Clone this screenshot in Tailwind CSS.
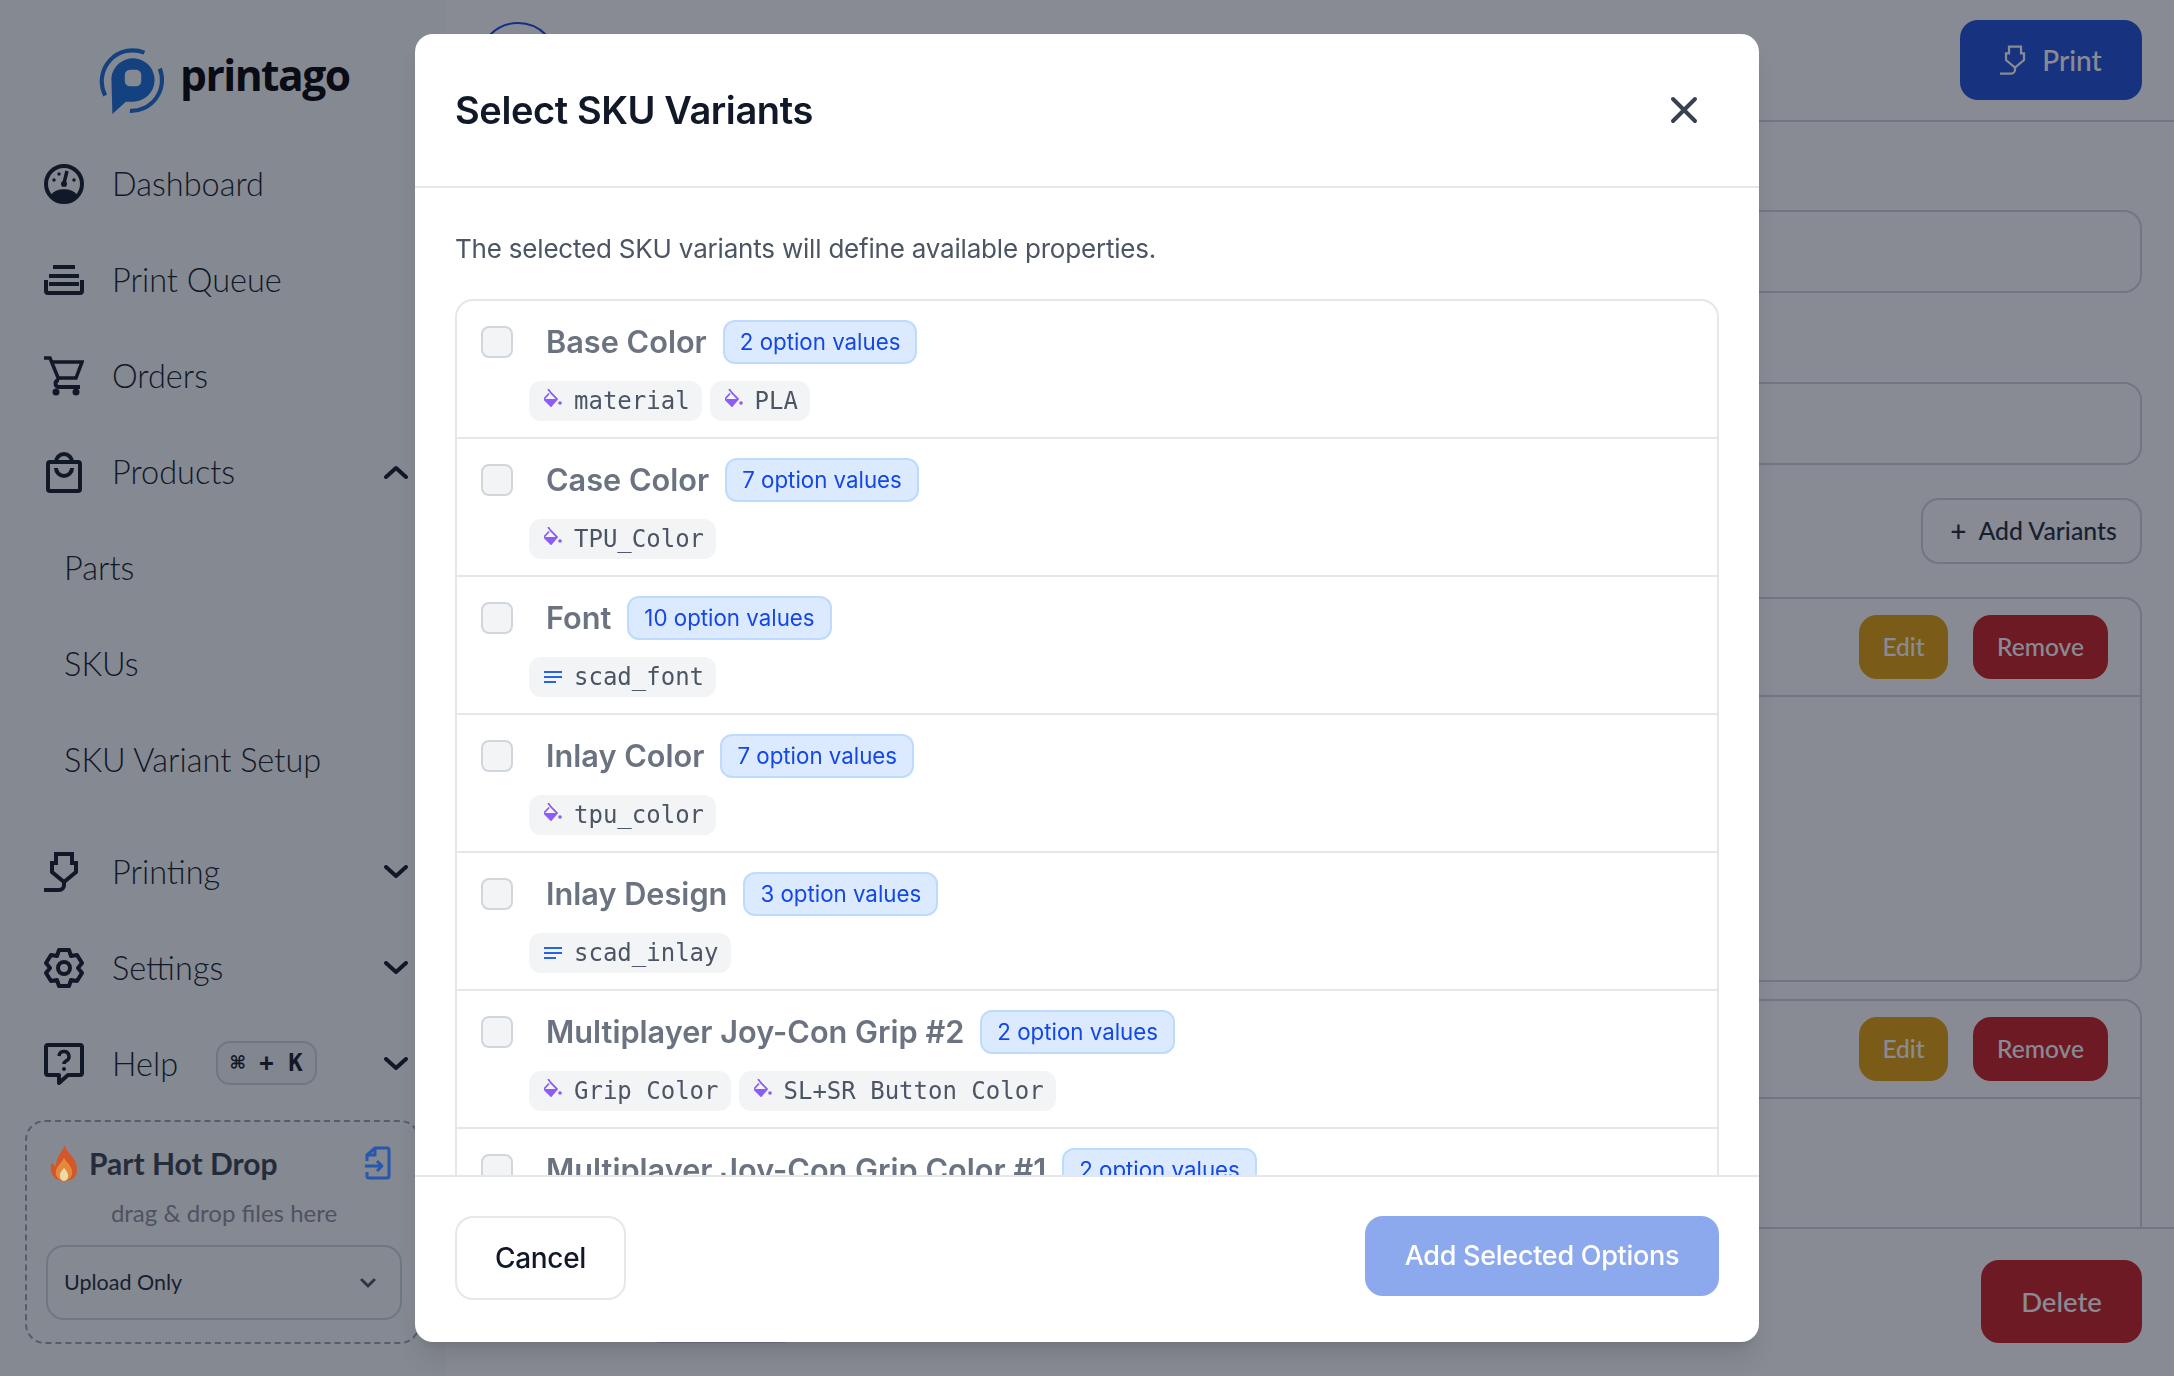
<!DOCTYPE html>
<html lang="en">
<head>
  <meta charset="UTF-8" />
  <title>Printago - Select SKU Variants</title>
  <meta name="viewport" content="width=device-width, initial-scale=1.0" />
  <script src="https://cdn.jsdelivr.net/npm/@tailwindcss/browser@4"></script>
</head>
<body class="bg-white h-screen overflow-hidden flex font-['Inter',sans-serif]">

  <!-- Sidebar -->
  <aside class="w-[446px] h-screen shrink-0 bg-[#f9fafb] flex flex-col text-[#1f2937] font-['Lato',sans-serif]">
    <div class="h-[136px] pl-[99px] pt-[48px] flex items-start gap-[15px]">
      <svg class="w-[66px] h-[66px] shrink-0" viewBox="0 0 64 64" fill="none">
        <path d="M44 4.500 A30 30 0 0 0 6 46" stroke="#1a6ad6" stroke-width="4"/>
        <path d="M59 20 A30 30 0 0 1 30 61" stroke="#1a6ad6" stroke-width="4"/>
        <path d="M13 64 L12 29 A21 21 0 1 1 33 52 L26 52 Z" fill="#176ad7"/>
        <rect x="25" y="21" width="16" height="16" rx="5" fill="#f9fafb"/>
      </svg>
      <span class="-mt-[1px] text-[42.500px] leading-[56px] font-bold tracking-[-1.5px] text-[#000] font-['Open_Sans',sans-serif]">printago</span>
    </div>
    <nav class="flex flex-col text-[32.500px] font-light text-[#111827]">
      <a class="h-[96px] flex items-center pl-[44px] gap-[28px]">
        <svg class="w-[40px] h-[40px]" viewBox="0 0 40 40" fill="none">
          <circle cx="20" cy="20" r="18" stroke="#111827" stroke-width="4"/>
          <path d="M7 31 A14 9 0 0 1 33 31 A18 18 0 0 1 7 31 Z" fill="#111827"/>
          <path d="M23 7 L20 19" stroke="#111827" stroke-width="3.500"/>
          <circle cx="20" cy="20" r="3" fill="#111827"/>
          <circle cx="10" cy="16" r="1.700" fill="#111827"/><circle cx="15" cy="10" r="1.700" fill="#111827"/><circle cx="30" cy="16" r="1.700" fill="#111827"/>
        </svg>
        <span>Dashboard</span>
      </a>
      <a class="h-[96px] flex items-center pl-[44px] gap-[28px]">
        <svg class="w-[40px] h-[30px]" viewBox="0 0 40 30" fill="none" stroke="#111827" stroke-width="4">
          <path d="M9 2h22M5 11h30M5 19h30"/>
          <path d="M2 15v11a2 2 0 0 0 2 2h32a2 2 0 0 0 2-2V15"/>
        </svg>
        <span>Print Queue</span>
      </a>
      <a class="h-[96px] flex items-center pl-[44px] gap-[28px]">
        <svg class="w-[40px] h-[40px]" viewBox="0 0 40 40" fill="none" stroke="#111827" stroke-width="3.500">
          <path d="M0 2h6l9 22"/>
          <path d="M8 6h30l-6 16H14"/>
          <path d="M15 24a3.500 3.500 0 0 0 0 7h21" stroke-width="4"/>
          <circle cx="12" cy="36" r="3.500" fill="#111827" stroke="none"/><circle cx="32" cy="36" r="3.500" fill="#111827" stroke="none"/>
        </svg>
        <span>Orders</span>
      </a>
      <a class="h-[96px] flex items-center pl-[44px] pr-[38px] gap-[28px]">
        <svg class="w-[40px] h-[42px]" viewBox="0 0 40 42" fill="none" stroke="#111827" stroke-width="4">
          <rect x="4" y="11" width="32" height="29" rx="2"/>
          <path d="M12 11a8 8 0 0 1 16 0"/>
          <path d="M12 17a8 8 0 0 0 16 0"/>
        </svg>
        <span>Products</span>
        <svg class="w-[24px] h-[14px] ml-auto" viewBox="0 0 24 14" fill="none" stroke="#111827" stroke-width="4" stroke-linecap="round" stroke-linejoin="round"><path d="M2 12l10-9 10 9"/></svg>
      </a>
      <a class="h-[96px] flex items-center pl-[64px]">Parts</a>
      <a class="h-[96px] flex items-center pl-[64px]">SKUs</a>
      <a class="h-[96px] flex items-center pl-[64px]">SKU Variant Setup</a>
      <a class="h-[96px] mt-[16px] flex items-center pl-[44px] pr-[38px] gap-[28px]">
        <svg class="w-[40px] h-[40px]" viewBox="0 0 40 40" fill="none" stroke="#111827" stroke-width="4">
          <path d="M12 2h16v9h4v9L20 30 8 20v-9h4z"/>
          <path d="M0 38h15a5 5 0 0 0 5-5v-3"/>
        </svg>
        <span>Printing</span>
        <svg class="w-[24px] h-[14px] ml-auto" viewBox="0 0 24 14" fill="none" stroke="#111827" stroke-width="4" stroke-linecap="round" stroke-linejoin="round"><path d="M2 2l10 9 10-9"/></svg>
      </a>
      <a class="h-[96px] flex items-center pl-[44px] pr-[38px] gap-[28px]">
        <svg class="w-[40px] h-[40px]" viewBox="0 0 40 40" fill="none" stroke="#111827" stroke-width="4" stroke-linejoin="round">
          <path d="M15 2h10l2 6 6-1 5 8-4 5 4 5-5 8-6-1-2 6H15l-2-6-6 1-5-8 4-5-4-5 5-8 6 1z"/>
          <circle cx="20" cy="20" r="6"/>
        </svg>
        <span>Settings</span>
        <svg class="w-[24px] h-[14px] ml-auto" viewBox="0 0 24 14" fill="none" stroke="#111827" stroke-width="4" stroke-linecap="round" stroke-linejoin="round"><path d="M2 2l10 9 10-9"/></svg>
      </a>
      <a class="h-[96px] flex items-center pl-[44px] pr-[38px] gap-[28px]">
        <svg class="w-[40px] h-[42px]" viewBox="0 0 40 42" fill="none" stroke="#111827" stroke-width="4" stroke-linejoin="round">
          <path d="M4 2h32a2 2 0 0 1 2 2v26a2 2 0 0 1-2 2H24l-9 8v-8H4a2 2 0 0 1-2-2V4a2 2 0 0 1 2-2z"/>
          <path d="M15 13a5 5 0 1 1 7 5c-1.500 1-2 2-2 3" stroke-width="3.500"/>
          <circle cx="20" cy="26" r="2" fill="#111827" stroke="none"/>
        </svg>
        <span>Help</span>
        <kbd class="ml-[10px] -mt-[2px] w-[101px] h-[44px] flex items-center justify-center border-2 border-gray-300 bg-gray-100 rounded-[14px] text-[24px] font-bold font-['DejaVu_Sans_Mono',monospace]">⌘ + K</kbd>
        <svg class="w-[24px] h-[14px] ml-auto" viewBox="0 0 24 14" fill="none" stroke="#111827" stroke-width="4" stroke-linecap="round" stroke-linejoin="round"><path d="M2 2l10 9 10-9"/></svg>
      </a>
    </nav>

    <!-- Hot drop -->
    <div class="mt-[8px] ml-[25px] w-[395px] h-[224px] border-2 border-dashed border-gray-400 rounded-[20px] pl-[19px] pt-[23px]">
      <div class="flex items-center h-[36px] w-[345px] pl-[3px]">
        <svg class="relative z-20 w-[30px] h-[36px] shrink-0" viewBox="0 0 28 35">
          <path d="M15 0c1 6 5 8 9 14 4 7 5 21-10 21C3 35-1 25 2 17l4 4c0-8 5-13 9-21z" fill="#d4562a"/>
          <path d="M14 12c1 4 8 8 8 15 0 5-5 8-8 8s-8-3-8-8c0-7 7-10 8-15z" fill="#e28a3c"/>
          <path d="M14 22c1 2 4 4 4 8s-3 5-4 5-4-1-4-5 3-6 4-8z" fill="#f0d9a8"/>
        </svg>
        <span class="ml-[10px] text-[30px] font-bold text-[#374151]">Part Hot Drop</span>
        <svg class="relative z-20 ml-auto w-[26px] h-[34px]" viewBox="0 0 26 34" fill="none" stroke="#2658ac" stroke-width="3" stroke-linejoin="round">
          <path d="M2 15V9l8-7h12a2 2 0 0 1 2 2v26a2 2 0 0 1-2 2H4a2 2 0 0 1-2-2v-4"/>
          <path d="M10 2v7H2"/>
          <path d="M0 20h16M12 15l5 5-5 5" stroke-width="3"/>
        </svg>
      </div>
      <p class="mt-[17px] w-[356px] text-center text-[24px] leading-[30px] text-[#8b8f99]">drag &amp; drop files here</p>
      <div class="mt-[17px] w-[356px] h-[75px] border-2 border-gray-300 rounded-[18px] flex items-center pl-[16px] pr-[24px] text-[21.500px]">
        <span>Upload Only</span>
        <svg class="ml-auto w-[16px] h-[10px]" viewBox="0 0 16 10" fill="none" stroke="#4b5563" stroke-width="3" stroke-linecap="round" stroke-linejoin="round"><path d="M2 2l6 6 6-6"/></svg>
      </div>
    </div>
  </aside>

  <!-- Page behind the dialog -->
  <main class="flex-1 h-screen flex flex-col font-['Lato',sans-serif]">
    <header class="h-[122px] shrink-0 border-b-2 border-gray-300 flex items-start pt-[20px] pl-[32px] pr-[32px]">
      <div class="w-[80px] h-[80px] mt-[2px] rounded-full border-2 border-blue-700"></div>
      <button class="ml-auto w-[182px] h-[80px] bg-[#1d4ed8] rounded-[18px] flex items-center justify-center gap-[12px] text-white text-[28px] font-medium">
        <svg class="w-[30px] h-[30px]" viewBox="0 0 40 40" fill="none" stroke="white" stroke-width="3"><path d="M12 2h16v9h4v9L20 30 8 20v-9h4z"/><path d="M0 38h15a5 5 0 0 0 5-5v-3"/></svg>
        Print
      </button>
    </header>
    <section class="flex-1 overflow-hidden pr-[32px] pl-[32px] pt-[88px] flex flex-col items-stretch">
      <div class="h-[83px] border-2 border-gray-300 rounded-[18px] shrink-0"></div>
      <div class="h-[83px] mt-[89px] border-2 border-gray-300 rounded-[18px] shrink-0"></div>
      <div class="mt-[33px] shrink-0 flex justify-end">
        <button class="w-[221px] h-[66px] border-2 border-gray-300 rounded-[18px] flex items-center justify-center gap-[12px] pl-[4px] text-[24.800px] font-medium text-[#1f2937]">
          <span class="text-[28px] leading-none">+</span> Add Variants
        </button>
      </div>
      <div class="mt-[33px] h-[385px] shrink-0 border-2 border-gray-300 rounded-[18px]">
        <div class="h-[98px] border-b-2 border-gray-300 flex items-start pt-[16px] justify-end gap-[25px] pr-[32px] text-[24.500px] font-medium text-white">
          <button class="w-[89px] h-[64px] rounded-[18px] bg-[#e39e09]">Edit</button>
          <button class="w-[135px] h-[64px] rounded-[18px] bg-[#cb1c20]">Remove</button>
        </div>
      </div>
      <div class="mt-[17px] h-[300px] shrink-0 border-2 border-gray-300 rounded-[18px]">
        <div class="h-[98px] border-b-2 border-gray-300 flex items-start pt-[16px] justify-end gap-[25px] pr-[32px] text-[24.500px] font-medium text-white">
          <button class="w-[89px] h-[64px] rounded-[18px] bg-[#e39e09]">Edit</button>
          <button class="w-[135px] h-[64px] rounded-[18px] bg-[#cb1c20]">Remove</button>
        </div>
      </div>
    </section>
    <footer class="h-[149px] shrink-0 border-t-2 border-gray-300 flex items-start justify-between pt-[31px] pl-[198px] pr-[32px]">
      <button class="w-[155px] h-[83px] rounded-[18px] bg-gray-100 border-2 border-gray-300"></button>
      <button class="w-[161px] h-[83px] rounded-[18px] bg-[#cb1c20] text-white text-[27.500px] font-medium">Delete</button>
    </footer>
  </main>

  <!-- Dialog overlay -->
  <div class="fixed inset-0 z-10 bg-[#111827]/50 pointer-events-none"></div>
  <div class="fixed inset-0 z-30 flex items-center justify-center">
    <div class="w-[1344px] h-[1308px] bg-white rounded-[18px] shadow-xl flex flex-col overflow-hidden">
      <div class="h-[154px] shrink-0 border-b-2 border-gray-200 flex items-center justify-between pl-[40px] pr-[61px]">
        <h2 class="text-[38px] font-semibold tracking-[-0.4px] text-[#111827]">Select SKU Variants</h2>
        <svg class="w-[28px] h-[28px]" viewBox="0 0 28 28" fill="none" stroke="#374151" stroke-width="4" stroke-linecap="round"><path d="M3 3l22 22M25 3L3 25"/></svg>
      </div>

      <div class="flex-1 overflow-hidden px-[40px]">
        <p class="mt-[42px] h-[38px] leading-[38px] text-[26px] tracking-[-0.2px] text-[#4b5563]">The selected SKU variants will define available properties.</p>
        <div class="mt-[31px] border-2 border-gray-200 rounded-[18px]">

          <div class="h-[138px] border-b-2 border-gray-200 pt-[19px]">
            <div class="flex items-center h-[44px] pl-[24px]">
              <span class="w-[32px] h-[32px] rounded-[8px] border-2 border-gray-300 bg-gray-100 shrink-0"></span>
              <span class="ml-[33px] text-[30.700px] font-semibold text-[#6b7280]">Base Color</span>
              <span class="ml-[16px] h-[44px] px-[15px] flex items-center rounded-[12px] border-2 border-blue-200 bg-blue-100 text-blue-700 text-[22.300px]">2 option values</span>
            </div>
            <div class="mt-[17px] ml-[72px] flex gap-[8px]">
              <span class="h-[40px] pl-[15px] pr-[12px] flex items-center gap-[12px] rounded-[12px] bg-gray-100 text-[#4b5563] text-[24px] font-['DejaVu_Sans_Mono',monospace]">
                <svg class="w-[18px] h-[18px] -translate-y-[3px]" viewBox="0 0 18 18"><path d="M4 0l3 4 6 6-6 7-7-7 5-5.500" fill="none" stroke="#8b5cf6" stroke-width="1.800"/><path d="M1 10h12l-6 7z" fill="#8b5cf6"/><circle cx="16" cy="14" r="1.800" fill="#8b5cf6"/></svg>material</span>
              <span class="h-[40px] pl-[15px] pr-[12px] flex items-center gap-[12px] rounded-[12px] bg-gray-100 text-[#4b5563] text-[24px] font-['DejaVu_Sans_Mono',monospace]">
                <svg class="w-[18px] h-[18px] -translate-y-[3px]" viewBox="0 0 18 18"><path d="M4 0l3 4 6 6-6 7-7-7 5-5.500" fill="none" stroke="#8b5cf6" stroke-width="1.800"/><path d="M1 10h12l-6 7z" fill="#8b5cf6"/><circle cx="16" cy="14" r="1.800" fill="#8b5cf6"/></svg>PLA</span>
            </div>
          </div>

          <div class="h-[138px] border-b-2 border-gray-200 pt-[19px]">
            <div class="flex items-center h-[44px] pl-[24px]">
              <span class="w-[32px] h-[32px] rounded-[8px] border-2 border-gray-300 bg-gray-100 shrink-0"></span>
              <span class="ml-[33px] text-[30.700px] font-semibold text-[#6b7280]">Case Color</span>
              <span class="ml-[16px] h-[44px] px-[15px] flex items-center rounded-[12px] border-2 border-blue-200 bg-blue-100 text-blue-700 text-[22.300px]">7 option values</span>
            </div>
            <div class="mt-[17px] ml-[72px] flex gap-[8px]">
              <span class="h-[40px] pl-[15px] pr-[12px] flex items-center gap-[12px] rounded-[12px] bg-gray-100 text-[#4b5563] text-[24px] font-['DejaVu_Sans_Mono',monospace]">
                <svg class="w-[18px] h-[18px] -translate-y-[3px]" viewBox="0 0 18 18"><path d="M4 0l3 4 6 6-6 7-7-7 5-5.500" fill="none" stroke="#8b5cf6" stroke-width="1.800"/><path d="M1 10h12l-6 7z" fill="#8b5cf6"/><circle cx="16" cy="14" r="1.800" fill="#8b5cf6"/></svg>TPU_Color</span>
            </div>
          </div>

          <div class="h-[138px] border-b-2 border-gray-200 pt-[19px]">
            <div class="flex items-center h-[44px] pl-[24px]">
              <span class="w-[32px] h-[32px] rounded-[8px] border-2 border-gray-300 bg-gray-100 shrink-0"></span>
              <span class="ml-[33px] text-[30.700px] font-semibold text-[#6b7280]">Font</span>
              <span class="ml-[16px] h-[44px] px-[15px] flex items-center rounded-[12px] border-2 border-blue-200 bg-blue-100 text-blue-700 text-[22.300px]">10 option values</span>
            </div>
            <div class="mt-[17px] ml-[72px] flex gap-[8px]">
              <span class="h-[40px] pl-[15px] pr-[12px] flex items-center gap-[12px] rounded-[12px] bg-gray-100 text-[#4b5563] text-[24px] font-['DejaVu_Sans_Mono',monospace]">
                <svg class="w-[18px] h-[18px]" viewBox="0 0 18 18" fill="none" stroke="#2563eb" stroke-width="2"><path d="M0 4h18M0 9h18M0 14h12"/></svg>scad_font</span>
            </div>
          </div>

          <div class="h-[138px] border-b-2 border-gray-200 pt-[19px]">
            <div class="flex items-center h-[44px] pl-[24px]">
              <span class="w-[32px] h-[32px] rounded-[8px] border-2 border-gray-300 bg-gray-100 shrink-0"></span>
              <span class="ml-[33px] text-[30.700px] font-semibold text-[#6b7280]">Inlay Color</span>
              <span class="ml-[16px] h-[44px] px-[15px] flex items-center rounded-[12px] border-2 border-blue-200 bg-blue-100 text-blue-700 text-[22.300px]">7 option values</span>
            </div>
            <div class="mt-[17px] ml-[72px] flex gap-[8px]">
              <span class="h-[40px] pl-[15px] pr-[12px] flex items-center gap-[12px] rounded-[12px] bg-gray-100 text-[#4b5563] text-[24px] font-['DejaVu_Sans_Mono',monospace]">
                <svg class="w-[18px] h-[18px] -translate-y-[3px]" viewBox="0 0 18 18"><path d="M4 0l3 4 6 6-6 7-7-7 5-5.500" fill="none" stroke="#8b5cf6" stroke-width="1.800"/><path d="M1 10h12l-6 7z" fill="#8b5cf6"/><circle cx="16" cy="14" r="1.800" fill="#8b5cf6"/></svg>tpu_color</span>
            </div>
          </div>

          <div class="h-[138px] border-b-2 border-gray-200 pt-[19px]">
            <div class="flex items-center h-[44px] pl-[24px]">
              <span class="w-[32px] h-[32px] rounded-[8px] border-2 border-gray-300 bg-gray-100 shrink-0"></span>
              <span class="ml-[33px] text-[30.700px] font-semibold text-[#6b7280]">Inlay Design</span>
              <span class="ml-[16px] h-[44px] px-[15px] flex items-center rounded-[12px] border-2 border-blue-200 bg-blue-100 text-blue-700 text-[22.300px]">3 option values</span>
            </div>
            <div class="mt-[17px] ml-[72px] flex gap-[8px]">
              <span class="h-[40px] pl-[15px] pr-[12px] flex items-center gap-[12px] rounded-[12px] bg-gray-100 text-[#4b5563] text-[24px] font-['DejaVu_Sans_Mono',monospace]">
                <svg class="w-[18px] h-[18px]" viewBox="0 0 18 18" fill="none" stroke="#2563eb" stroke-width="2"><path d="M0 4h18M0 9h18M0 14h12"/></svg>scad_inlay</span>
            </div>
          </div>

          <div class="h-[138px] border-b-2 border-gray-200 pt-[19px]">
            <div class="flex items-center h-[44px] pl-[24px]">
              <span class="w-[32px] h-[32px] rounded-[8px] border-2 border-gray-300 bg-gray-100 shrink-0"></span>
              <span class="ml-[33px] text-[30.700px] font-semibold text-[#6b7280]">Multiplayer Joy-Con Grip #2</span>
              <span class="ml-[16px] h-[44px] px-[15px] flex items-center rounded-[12px] border-2 border-blue-200 bg-blue-100 text-blue-700 text-[22.300px]">2 option values</span>
            </div>
            <div class="mt-[17px] ml-[72px] flex gap-[8px]">
              <span class="h-[40px] pl-[15px] pr-[12px] flex items-center gap-[12px] rounded-[12px] bg-gray-100 text-[#4b5563] text-[24px] font-['DejaVu_Sans_Mono',monospace]">
                <svg class="w-[18px] h-[18px] -translate-y-[3px]" viewBox="0 0 18 18"><path d="M4 0l3 4 6 6-6 7-7-7 5-5.500" fill="none" stroke="#8b5cf6" stroke-width="1.800"/><path d="M1 10h12l-6 7z" fill="#8b5cf6"/><circle cx="16" cy="14" r="1.800" fill="#8b5cf6"/></svg>Grip Color</span>
              <span class="h-[40px] pl-[15px] pr-[12px] flex items-center gap-[12px] rounded-[12px] bg-gray-100 text-[#4b5563] text-[24px] font-['DejaVu_Sans_Mono',monospace]">
                <svg class="w-[18px] h-[18px] -translate-y-[3px]" viewBox="0 0 18 18"><path d="M4 0l3 4 6 6-6 7-7-7 5-5.500" fill="none" stroke="#8b5cf6" stroke-width="1.800"/><path d="M1 10h12l-6 7z" fill="#8b5cf6"/><circle cx="16" cy="14" r="1.800" fill="#8b5cf6"/></svg>SL+SR Button Color</span>
            </div>
          </div>

          <div class="h-[138px] pt-[19px]">
            <div class="flex items-center h-[44px] pl-[24px]">
              <span class="w-[32px] h-[32px] rounded-[8px] border-2 border-gray-300 bg-gray-100 shrink-0"></span>
              <span class="ml-[33px] text-[30.700px] font-semibold text-[#6b7280]">Multiplayer Joy-Con Grip Color #1</span>
              <span class="ml-[16px] h-[44px] px-[15px] flex items-center rounded-[12px] border-2 border-blue-200 bg-blue-100 text-blue-700 text-[22.300px]">2 option values</span>
            </div>
          </div>
        </div>
      </div>

      <div class="h-[167px] shrink-0 border-t-2 border-gray-200 flex items-start justify-between px-[40px] pt-[39px]">
        <button class="w-[171px] h-[84px] border-2 border-gray-200 rounded-[18px] text-[28px] tracking-[-0.3px] font-medium text-[#111827]">Cancel</button>
        <button class="w-[354px] h-[80px] bg-[#8ca9ee] rounded-[18px] text-[27px] tracking-[-0.28px] font-medium text-white">Add Selected Options</button>
      </div>
    </div>
  </div>
</body>
</html>
